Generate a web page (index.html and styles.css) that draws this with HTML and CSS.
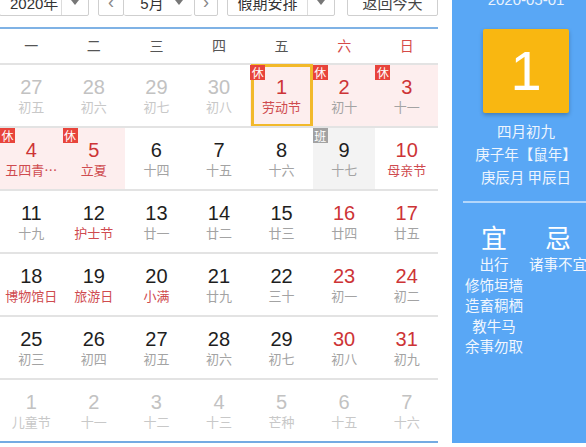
FILE: index.html
```html
<!DOCTYPE html>
<html lang="zh">
<head>
<meta charset="utf-8">
<link rel="stylesheet" href="styles.css">
</head>
<body>
<div class="page">
  <div class="main">
    <div class="toolbar">
      <div class="sel sel-year"><span class="sel-text">2020年</span><span class="sel-arrow"><i class="tri"></i></span></div>
      <div class="month-group">
        <div class="btn nav">‹</div>
        <div class="sel sel-month"><span class="sel-text">5月</span><span class="sel-arrow plain"><i class="tri"></i></span></div>
        <div class="btn nav">›</div>
      </div>
      <div class="sel sel-hol"><span class="sel-text">假期安排</span><span class="sel-arrow"><i class="tri"></i></span></div>
      <div class="btn today">返回今天</div>
    </div>
    <div class="weekdays">
      <span>一</span><span>二</span><span>三</span><span>四</span><span>五</span><span class="we">六</span><span class="we">日</span>
    </div>
    <div class="grid">
      <div class="cell other"><div class="num">27</div><div class="lunar">初五</div></div>
      <div class="cell other"><div class="num">28</div><div class="lunar">初六</div></div>
      <div class="cell other"><div class="num">29</div><div class="lunar">初七</div></div>
      <div class="cell other"><div class="num">30</div><div class="lunar">初八</div></div>
      <div class="cell rest selected"><span class="badge">休</span><div class="num">1</div><div class="lunar fest">劳动节</div></div>
      <div class="cell rest"><span class="badge">休</span><div class="num">2</div><div class="lunar">初十</div></div>
      <div class="cell rest"><span class="badge">休</span><div class="num">3</div><div class="lunar">十一</div></div>

      <div class="cell rest"><span class="badge">休</span><div class="num">4</div><div class="lunar fest">五四青…</div></div>
      <div class="cell rest"><span class="badge">休</span><div class="num">5</div><div class="lunar fest">立夏</div></div>
      <div class="cell"><div class="num">6</div><div class="lunar">十四</div></div>
      <div class="cell"><div class="num">7</div><div class="lunar">十五</div></div>
      <div class="cell"><div class="num">8</div><div class="lunar">十六</div></div>
      <div class="cell work"><span class="badge gray">班</span><div class="num">9</div><div class="lunar">十七</div></div>
      <div class="cell wkend"><div class="num">10</div><div class="lunar fest">母亲节</div></div>

      <div class="cell"><div class="num">11</div><div class="lunar">十九</div></div>
      <div class="cell"><div class="num">12</div><div class="lunar fest">护士节</div></div>
      <div class="cell"><div class="num">13</div><div class="lunar">廿一</div></div>
      <div class="cell"><div class="num">14</div><div class="lunar">廿二</div></div>
      <div class="cell"><div class="num">15</div><div class="lunar">廿三</div></div>
      <div class="cell wkend"><div class="num">16</div><div class="lunar">廿四</div></div>
      <div class="cell wkend"><div class="num">17</div><div class="lunar">廿五</div></div>

      <div class="cell"><div class="num">18</div><div class="lunar fest">博物馆日</div></div>
      <div class="cell"><div class="num">19</div><div class="lunar fest">旅游日</div></div>
      <div class="cell"><div class="num">20</div><div class="lunar fest">小满</div></div>
      <div class="cell"><div class="num">21</div><div class="lunar">廿九</div></div>
      <div class="cell"><div class="num">22</div><div class="lunar">三十</div></div>
      <div class="cell wkend"><div class="num">23</div><div class="lunar">初一</div></div>
      <div class="cell wkend"><div class="num">24</div><div class="lunar">初二</div></div>

      <div class="cell"><div class="num">25</div><div class="lunar">初三</div></div>
      <div class="cell"><div class="num">26</div><div class="lunar">初四</div></div>
      <div class="cell"><div class="num">27</div><div class="lunar">初五</div></div>
      <div class="cell"><div class="num">28</div><div class="lunar">初六</div></div>
      <div class="cell"><div class="num">29</div><div class="lunar">初七</div></div>
      <div class="cell wkend"><div class="num">30</div><div class="lunar">初八</div></div>
      <div class="cell wkend"><div class="num">31</div><div class="lunar">初九</div></div>

      <div class="cell other"><div class="num">1</div><div class="lunar">儿童节</div></div>
      <div class="cell other"><div class="num">2</div><div class="lunar">十一</div></div>
      <div class="cell other"><div class="num">3</div><div class="lunar">十二</div></div>
      <div class="cell other"><div class="num">4</div><div class="lunar">十三</div></div>
      <div class="cell other"><div class="num">5</div><div class="lunar">芒种</div></div>
      <div class="cell other"><div class="num">6</div><div class="lunar">十五</div></div>
      <div class="cell other"><div class="num">7</div><div class="lunar">十六</div></div>
    </div>
  </div>
  <div class="side">
    <div class="side-date">2020-05-01</div>
    <div class="bigday">1</div>
    <div class="side-info">
      <div>四月初九</div>
      <div>庚子年【鼠年】</div>
      <div>庚辰月 甲辰日</div>
    </div>
    <div class="side-rule"></div>
    <div class="yiji">
      <div class="yiji-col">
        <div class="yiji-head">宜</div>
        <div class="yiji-item">出行</div>
        <div class="yiji-item">修饰垣墙</div>
        <div class="yiji-item">造畜稠栖</div>
        <div class="yiji-item">教牛马</div>
        <div class="yiji-item">余事勿取</div>
      </div>
      <div class="yiji-col">
        <div class="yiji-head">忌</div>
        <div class="yiji-item">诸事不宜</div>
      </div>
    </div>
  </div>
</div>
</body>
</html>
```

FILE: styles.css
```css
html, body {
  margin: 0;
  padding: 0;
  background: #fff;
  overflow: hidden;
}
body {
  font-family: "Liberation Sans", "Noto Sans CJK SC", sans-serif;
  width: 586px;
  height: 447px;
}
.page {
  display: flex;
  align-items: stretch;
  width: 600px;
  margin-top: -11px;
}
.main {
  width: 438px;
  flex: none;
}
.toolbar {
  display: flex;
  height: 27px;
  margin-bottom: 11px;
  position: relative;
}
.toolbar::after {
  content: "";
  position: absolute;
  left: 0;
  right: 0;
  bottom: -13px;
  height: 2px;
  background: #7fb2e5;
}
.sel, .btn {
  box-sizing: border-box;
  height: 27px;
  border: 1px solid #cfcfcf;
  border-radius: 2px;
  background: #fff;
  color: #333;
  font-size: 15px;
  font-family: "Liberation Sans", "Noto Sans CJK SC", sans-serif;
  display: flex;
  align-items: center;
}
.sel-text {
  flex: 1;
  text-align: center;
}
.sel-arrow {
  width: 26px;
  align-self: stretch;
  border-left: 1px solid #dcdcdc;
  display: flex;
  align-items: center;
  justify-content: center;
}
.sel-arrow.plain {
  border-left: 0;
}
.tri {
  width: 0;
  height: 0;
  border-left: 4px solid transparent;
  border-right: 4px solid transparent;
  border-top: 5px solid #777;
}
.sel-year {
  width: 90px;
  margin-left: -1px;
}
.sel-year .sel-text { padding-left: 10px; text-align: left; }
.month-group {
  display: flex;
  margin-left: 9px;
}
.nav {
  width: 26px;
  justify-content: center;
  color: #888;
  font-size: 18px;
}
.sel-month {
  width: 68px;
  border-left: 0;
  border-right: 0;
}
.sel-month .sel-text { padding-left: 14px; }
.month-group .nav:last-child { margin-left: 2px; width: 24px; }
.sel-hol {
  width: 108px;
  margin-left: 9px;
}
.btn.today {
  width: 91px;
  margin-left: 12px;
  justify-content: center;
  color: #444;
}
.weekdays {
  display: grid;
  grid-template-columns: repeat(7, 1fr);
  height: 36px;
  align-items: center;
  margin-top: 2px;
  font-family: "Noto Sans CJK SC", sans-serif;
  font-size: 14px;
  color: #555;
  text-align: center;
}
.weekdays .we { color: #d54a48; }
.grid {
  display: grid;
  grid-template-columns: repeat(7, 1fr);
  grid-auto-rows: 63px;
  border-bottom: 2px solid #74abe2;
}
.cell {
  position: relative;
  border-top: 2px solid #e3e3e3;
  display: flex;
  flex-direction: column;
  align-items: center;
  justify-content: center;
  background: #fff;
}
.num {
  font-family: "Liberation Sans", Arial, sans-serif;
  font-size: 20px;
  line-height: 22px;
  color: #1e1e1e;
}
.lunar {
  font-family: "Noto Sans CJK SC", sans-serif;
  font-size: 13px;
  line-height: 18px;
  color: #a3a3a3;
  white-space: nowrap;
}
.lunar.fest { color: #cf4b4f; }
.cell.other .num { color: #c2c2c2; }
.cell.other .lunar { color: #c8c8c8; }
.cell.rest { background: #fdeeee; }
.cell.rest .num, .cell.wkend .num { color: #cd3436; }
.cell.work { background: #f3f3f3; }
.cell.selected::after {
  content: "";
  position: absolute;
  left: 1px;
  right: 0;
  top: -1px;
  bottom: -1px;
  border: 3px solid #f2b92b;
  pointer-events: none;
}
.badge {
  position: absolute;
  left: 0;
  top: 0;
  z-index: 2;
  width: 15px;
  height: 15px;
  background: #e8443b;
  color: #fff;
  font-family: "Noto Sans CJK SC", sans-serif;
  font-size: 12px;
  line-height: 15px;
  text-align: center;
}
.badge.gray { background: #a2a2a2; }
.side {
  width: 148px;
  flex: none;
  margin-left: 14px;
  background: #59a7f5;
  color: #fff;
  font-family: "Noto Sans CJK SC", sans-serif;
  display: flex;
  flex-direction: column;
  align-items: center;
  padding-top: 1px;
  box-sizing: border-box;
}
.side-date {
  font-family: "Liberation Sans", Arial, sans-serif;
  font-size: 15px;
  line-height: 20px;
  color: #eaf3fd;
}
.bigday {
  margin-top: 19px;
  width: 86px;
  height: 84px;
  border-radius: 2px;
  background: #f9b711;
  box-shadow: 0 2px 4px rgba(0, 0, 0, 0.25);
  font-family: "Liberation Sans", Arial, sans-serif;
  font-size: 56px;
  line-height: 84px;
  text-align: center;
  color: #fff;
}
.side-info {
  margin-top: 6px;
  font-size: 14.5px;
  line-height: 23px;
  text-align: center;
  color: #eef5fe;
}
.side-rule {
  align-self: stretch;
  margin: 13px 0 0 11px;
  height: 2px;
  background: rgba(255, 255, 255, 0.55);
}
.yiji {
  display: flex;
  align-self: stretch;
  margin-top: 17px;
  padding-left: 10px;
}
.yiji-col {
  width: 64px;
  display: flex;
  flex-direction: column;
  align-items: center;
}
.yiji-head {
  font-size: 26px;
  line-height: 34px;
}
.yiji-item {
  font-size: 14.5px;
  line-height: 20.5px;
  white-space: nowrap;
  color: #f2f7fe;
}
```
